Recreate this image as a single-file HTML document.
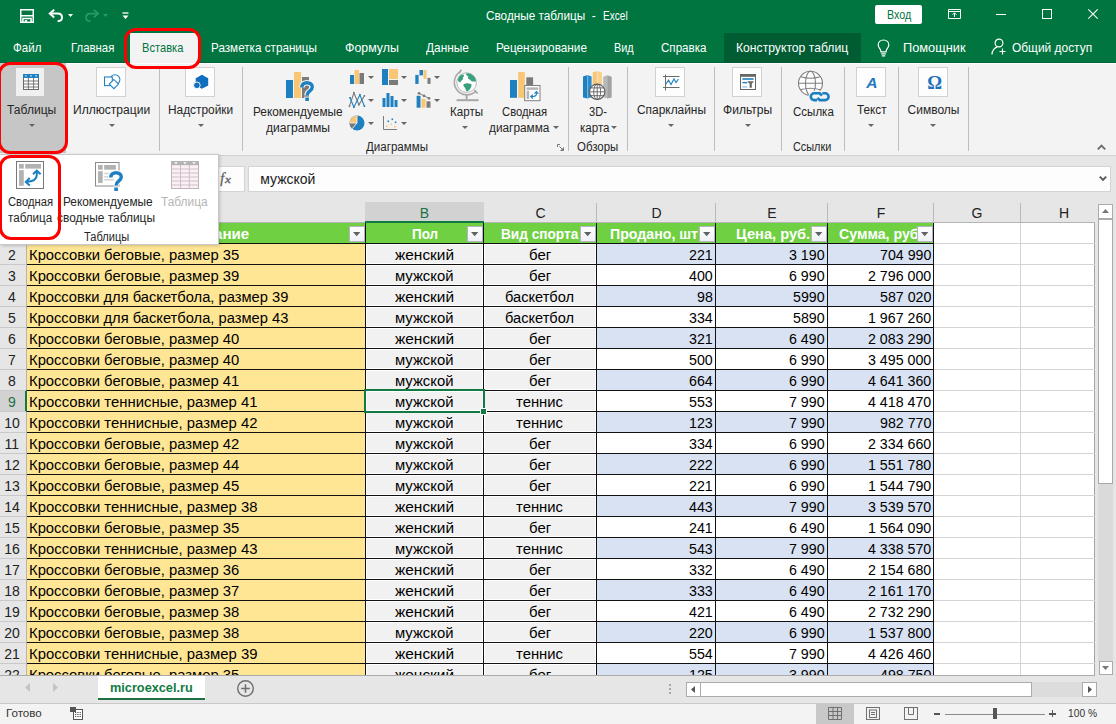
<!DOCTYPE html>
<html><head><meta charset="utf-8"><title>Excel</title>
<style>
html,body{margin:0;padding:0;}
body{width:1116px;height:724px;overflow:hidden;position:relative;background:#e6e6e6;font-family:"Liberation Sans",sans-serif;}
.r{position:absolute;box-sizing:border-box;}
.t{position:absolute;white-space:pre;line-height:1;transform-origin:0 0;font-family:"Liberation Sans",sans-serif;}
svg{overflow:visible}
</style></head><body>
<div class="r" style="left:0px;top:0px;width:1116px;height:63px;background:#007540;"></div>
<div class="r" style="left:0px;top:62px;width:1116px;height:1px;background:#00653a;"></div>
<svg class="r" style="left:20px;top:9px;" width="14" height="14" viewBox="0 0 14 14"><path d="M0.75 0.75H13.25V13.25H0.75Z M0.75 6.7H13.25 M2.9 13.25V9.5H11.1V13.25" fill="none" stroke="#fff" stroke-width="1.5"/><rect x="4.8" y="11.1" width="2.3" height="1.8" fill="#fff"/></svg>
<svg class="r" style="left:48px;top:9px;" width="16" height="13" viewBox="0 0 16 13"><path d="M6.2 0.8L1.8 4.6L6.2 8.4" fill="none" stroke="#fff" stroke-width="2" stroke-linejoin="miter"/><path d="M2.2 4.6H9.6C12.6 4.6 14 6.4 14 8.4C14 10.6 12.4 12 9.6 12.2" fill="none" stroke="#fff" stroke-width="2"/></svg>
<svg class="r" style="left:68px;top:14px;" width="6" height="3" viewBox="0 0 6 3"><path d="M0 0H5L2.5 3Z" fill="#fff"/></svg>
<svg class="r" style="left:84px;top:9px;" width="16" height="13" viewBox="0 0 16 13"><path d="M9.8 0.8L14.2 4.6L9.8 8.4" fill="none" stroke="#2a9a6c" stroke-width="1.7"/><path d="M13.8 4.6H6.4C3.4 4.6 2 6.4 2 8.4C2 10.6 3.6 12 6.4 12.2" fill="none" stroke="#2a9a6c" stroke-width="1.7"/></svg>
<svg class="r" style="left:103px;top:14px;" width="6" height="3" viewBox="0 0 6 3"><path d="M0 0H5L2.5 3Z" fill="#2a9a6c"/></svg>
<svg class="r" style="left:122px;top:12px;" width="7" height="8" viewBox="0 0 7 8"><path d="M0.5 1H6.5" stroke="#fff" stroke-width="1.3"/><path d="M0.5 3.6H6.5L3.5 7Z" fill="#fff"/></svg>
<span class="t" style="left:485.50px;top:10px;font-size:12.00px;color:#fff;transform:scaleX(0.9806);">Сводные таблицы</span>
<span class="t" style="left:591.80px;top:10px;font-size:12.00px;color:#fff;">-</span>
<span class="t" style="left:602.80px;top:10px;font-size:12.00px;color:#fff;transform:scaleX(0.8419);">Excel</span>
<div class="r" style="left:875px;top:5px;width:47px;height:19px;background:#fff;border-radius:2px;"></div>
<span class="t" style="left:886.80px;top:9px;font-size:12.00px;color:#007540;transform:scaleX(0.8923);">Вход</span>
<svg class="r" style="left:948px;top:9px;" width="13" height="10" viewBox="0 0 13 10"><path d="M0.5 0.5H12.5V9.5H0.5Z M0.5 2.5H12.5" fill="none" stroke="#fff" stroke-width="1"/><path d="M6.5 8V4 M4.5 5.8L6.5 3.8L8.5 5.8" fill="none" stroke="#fff" stroke-width="1"/></svg>
<div class="r" style="left:996px;top:14px;width:10px;height:1px;background:#fff;"></div>
<div class="r" style="left:1042px;top:9px;width:10px;height:10px;border:1px solid #fff;"></div>
<svg class="r" style="left:1088px;top:9px;" width="10" height="10" viewBox="0 0 10 10"><path d="M0.3 0.3L9.7 9.7M9.7 0.3L0.3 9.7" stroke="#fff" stroke-width="1.1"/></svg>
<div class="r" style="left:724px;top:33px;width:137px;height:30px;background:#005C32;"></div>
<span class="t" style="left:13.30px;top:42px;font-size:12.40px;color:#fff;transform:scaleX(0.9310);">Файл</span>
<span class="t" style="left:71.30px;top:42px;font-size:12.40px;color:#fff;transform:scaleX(0.9198);">Главная</span>
<span class="t" style="left:211.30px;top:42px;font-size:12.40px;color:#fff;transform:scaleX(0.9425);">Разметка страницы</span>
<span class="t" style="left:345.00px;top:42px;font-size:12.40px;color:#fff;">Формулы</span>
<span class="t" style="left:426.00px;top:42px;font-size:12.40px;color:#fff;transform:scaleX(0.9593);">Данные</span>
<span class="t" style="left:496.30px;top:42px;font-size:12.40px;color:#fff;transform:scaleX(0.9506);">Рецензирование</span>
<span class="t" style="left:614.30px;top:42px;font-size:12.40px;color:#fff;transform:scaleX(0.8777);">Вид</span>
<span class="t" style="left:661.30px;top:42px;font-size:12.40px;color:#fff;transform:scaleX(0.9349);">Справка</span>
<span class="t" style="left:736.00px;top:42px;font-size:12.40px;color:#fff;transform:scaleX(0.9817);">Конструктор таблиц</span>
<span class="t" style="left:903.40px;top:42px;font-size:12.40px;color:#fff;transform:scaleX(1.0313);">Помощник</span>
<span class="t" style="left:1011.60px;top:42px;font-size:12.40px;color:#fff;transform:scaleX(0.9625);">Общий доступ</span>
<div class="r" style="left:130px;top:33px;width:67.5px;height:32px;background:#f3f3f3;"></div>
<span class="t" style="left:142.30px;top:42px;font-size:12.40px;color:#007540;transform:scaleX(0.8975);">Вставка</span>
<svg class="r" style="left:877px;top:39px;" width="13" height="18" viewBox="0 0 13 18"><path d="M6.5 1C3.4 1 1.2 3.3 1.2 6.1C1.2 8.2 2.6 9.3 3.4 10.6C3.8 11.3 3.9 12 3.9 12.8H9.1C9.1 12 9.2 11.3 9.6 10.6C10.4 9.3 11.8 8.2 11.8 6.1C11.8 3.3 9.6 1 6.5 1Z" fill="none" stroke="#fff" stroke-width="1.2"/><path d="M4.2 14.8H8.8M4.8 16.8H8.2" stroke="#fff" stroke-width="1.2"/></svg>
<svg class="r" style="left:991px;top:38px;" width="16" height="18" viewBox="0 0 16 18"><circle cx="8" cy="5" r="3.9" fill="none" stroke="#fff" stroke-width="1.2"/><path d="M1 16.5C1 12 4 9.6 6.2 9.2" fill="none" stroke="#fff" stroke-width="1.2"/><path d="M11.5 10.5V16.5M8.5 13.5H14.5" stroke="#fff" stroke-width="1.2"/></svg>
<div class="r" style="left:0px;top:63px;width:1116px;height:92px;background:#f3f3f3;"></div>
<div class="r" style="left:0px;top:63px;width:1116px;height:1px;background:#fcfcfc;"></div>
<div class="r" style="left:0px;top:155px;width:1116px;height:1px;background:#d2d2d2;"></div>
<div class="r" style="left:0px;top:63px;width:66px;height:90px;background:#c6c6c6;"></div>
<div class="r" style="left:16px;top:68px;width:28px;height:28px;background:#f0f0f0;"></div>
<svg class="r" style="left:23px;top:74px;" width="16" height="16" viewBox="0 0 16 16"><rect x="0.5" y="0.5" width="15" height="15" fill="#fff" stroke="#6a6a6a" stroke-width="1"/><rect x="0" y="0" width="16" height="4" fill="#1e80c0"/><path d="M0.5 7H15.5M0.5 10H15.5M0.5 13H15.5M5.4 4V15.5M10.6 4V15.5" stroke="#6a6a6a" stroke-width="0.9"/><path d="M2 1.9H3.8M7.1 1.9H8.9M12.2 1.9H14" stroke="#fff" stroke-width="0.9"/></svg>
<span class="t" style="left:6.60px;top:104px;font-size:12.00px;color:#262626;transform:scaleX(1.0057);">Таблицы</span>
<svg class="r" style="left:28.5px;top:124px;" width="6" height="3" viewBox="0 0 6 3"><path d="M0 0H6L3 3Z" fill="#666"/></svg>
<div class="r" style="left:96px;top:67px;width:30px;height:30px;background:#fdfdfd;border:1px solid #d2d2d2;"></div>
<svg class="r" style="left:103px;top:73px;" width="18" height="17" viewBox="0 0 18 17"><circle cx="12" cy="6.6" r="4.9" fill="#fdfdfd" stroke="#1e80c0" stroke-width="1.05"/><rect x="1.5" y="4" width="7.8" height="8.6" fill="#fdfdfd" stroke="#1e80c0" stroke-width="1.05"/><path d="M10.9 6.5L15.5 11.1L10.9 15.7L6.3 11.1Z" fill="#fdfdfd" stroke="#1e80c0" stroke-width="1.05"/></svg>
<span class="t" style="left:73.40px;top:104px;font-size:12.00px;color:#262626;transform:scaleX(1.0047);">Иллюстрации</span>
<svg class="r" style="left:109.3px;top:124px;" width="6" height="3" viewBox="0 0 6 3"><path d="M0 0H6L3 3Z" fill="#666"/></svg>
<div class="r" style="left:159px;top:67px;width:1px;height:84px;background:#bebebe;"></div>
<div class="r" style="left:185px;top:67px;width:30px;height:30px;background:#fdfdfd;border:1px solid #d2d2d2;"></div>
<svg class="r" style="left:193px;top:74px;" width="16" height="16" viewBox="0 0 16 16"><path d="M8.9 0.8L15.2 4.2V11.4L8.9 14.8L2.7 11.4V4.2Z" fill="#106ebe"/><circle cx="3.9" cy="11.3" r="3.3" fill="#106ebe" stroke="#fdfdfd" stroke-width="0.9"/></svg>
<span class="t" style="left:168.40px;top:104px;font-size:12.00px;color:#262626;transform:scaleX(0.9891);">Надстройки</span>
<svg class="r" style="left:198px;top:124px;" width="6" height="3" viewBox="0 0 6 3"><path d="M0 0H6L3 3Z" fill="#666"/></svg>
<div class="r" style="left:242px;top:67px;width:1px;height:84px;background:#bebebe;"></div>
<svg class="r" style="left:286px;top:72px;" width="23" height="26" viewBox="0 0 23 26"><rect x="0" y="8" width="7" height="18" fill="#1e80c0"/><rect x="8" y="0" width="7" height="26" fill="#f9c676"/><rect x="16" y="5" width="7" height="21" fill="#7a7a7a"/></svg>
<svg class="r" style="left:299.8px;top:81px;" width="14" height="21" viewBox="0 0 14 21"><path d="M1.8 6.6C1.8 3.2 4 1.7 7 1.7C10.2 1.7 12.3 3.4 12.3 6C12.3 8.2 10.8 9.2 9.3 10.4C7.7 11.6 7.1 12.4 7.1 14.6" fill="none" stroke="#f3f3f3" stroke-width="5.6"/><rect x="4.2" y="15.6" width="5.8" height="5.4" fill="#f3f3f3"/><path d="M1.8 6.6C1.8 3.2 4 1.7 7 1.7C10.2 1.7 12.3 3.4 12.3 6C12.3 8.2 10.8 9.2 9.3 10.4C7.7 11.6 7.1 12.4 7.1 14.6" fill="none" stroke="#1e80c0" stroke-width="3.4"/><rect x="5.3" y="16.5" width="3.6" height="3.5" fill="#1e80c0"/></svg>
<span class="t" style="left:253.40px;top:106px;font-size:12.00px;color:#262626;transform:scaleX(0.9863);">Рекомендуемые</span>
<span class="t" style="left:265.60px;top:122px;font-size:12.00px;color:#262626;transform:scaleX(1.0120);">диаграммы</span>
<svg class="r" style="left:349px;top:69px;" width="16" height="15" viewBox="0 0 16 15"><rect x="1" y="6" width="4" height="9" fill="#1e80c0"/><rect x="5.5" y="1" width="4.5" height="14" fill="#f9c676"/><rect x="10.5" y="4" width="4.5" height="11" fill="#7a7a7a"/></svg>
<svg class="r" style="left:349px;top:92px;" width="16" height="16" viewBox="0 0 16 16"><path d="M0.5 14.2L4.9 0.8L9.9 12.8L15.4 3.8" fill="none" stroke="#7a7a7a" stroke-width="1.1"/><path d="M1 5.8L4.9 15.2L10.9 2.8L15.4 14.2" fill="none" stroke="#1e80c0" stroke-width="1.1"/><path d="M-0.3 13.4h1.6v1.6h-1.6zM4.1 0h1.6v1.6h-1.6zM9.1 12h1.6v1.6h-1.6zM14.6 3h1.6v1.6h-1.6z" fill="#7a7a7a"/><path d="M0.2 5h1.6v1.6h-1.6zM4.1 14.4h1.6v1.6h-1.6zM10.1 2h1.6v1.6h-1.6zM14.6 13.4h1.6v1.6h-1.6z" fill="#1e80c0"/></svg>
<svg class="r" style="left:349px;top:115px;" width="16" height="16" viewBox="0 0 16 16"><circle cx="8" cy="8" r="7.5" fill="#1e80c0"/><path d="M8 8V0.5A7.5 7.5 0 0 0 0.5 8Z" fill="#f9c676"/><path d="M8 8H0.5A7.5 7.5 0 0 0 3.2 13.8Z" fill="#7a7a7a"/><path d="M8 0.5V8H0.5M8 8L3.2 13.8" stroke="#f3f3f3" stroke-width="0.9" fill="none"/></svg>
<svg class="r" style="left:381.5px;top:69px;" width="17" height="16" viewBox="0 0 17 16"><rect x="0" y="0" width="6" height="16" fill="#1e80c0"/><rect x="7" y="0" width="9" height="10" fill="#f9c676"/><rect x="7" y="11" width="9" height="5" fill="#7a7a7a"/></svg>
<svg class="r" style="left:381.5px;top:91.6px;" width="16" height="15" viewBox="0 0 16 15"><rect x="0.5" y="6" width="3" height="9" fill="#1e80c0"/><rect x="4.5" y="1" width="3" height="14" fill="#1e80c0"/><rect x="8.5" y="4" width="3" height="11" fill="#1e80c0"/><rect x="12.5" y="8" width="3" height="7" fill="#1e80c0"/></svg>
<svg class="r" style="left:382px;top:116px;" width="15" height="15" viewBox="0 0 15 15"><path d="M1.5 0V13.5H15" fill="none" stroke="#7a7a7a" stroke-width="1"/><rect x="4" y="9.5" width="1.6" height="1.6" fill="#f9c676"/><rect x="5.5" y="4.5" width="1.6" height="1.6" fill="#1e80c0"/><rect x="8.5" y="7.5" width="1.6" height="1.6" fill="#f9c676"/><rect x="9.5" y="2.5" width="1.6" height="1.6" fill="#1e80c0"/><rect x="12" y="10" width="1.6" height="1.6" fill="#f9c676"/><rect x="12.8" y="5.5" width="1.6" height="1.6" fill="#1e80c0"/></svg>
<svg class="r" style="left:414.5px;top:69px;" width="16" height="15" viewBox="0 0 16 15"><rect x="0.3" y="5.9" width="3.3" height="9" fill="#1e80c0"/><rect x="4.5" y="1" width="3.5" height="5.4" fill="#1e80c0"/><rect x="8.5" y="1" width="3" height="8.9" fill="#f9c676"/><rect x="12.5" y="8.9" width="3" height="6" fill="#7a7a7a"/></svg>
<svg class="r" style="left:414.5px;top:92px;" width="16" height="16" viewBox="0 0 16 16"><rect x="1.6" y="3.8" width="3.9" height="11.9" fill="#1e80c0"/><rect x="6.5" y="6.8" width="4" height="8.9" fill="#f9c676"/><rect x="11.5" y="9.3" width="4" height="6.4" fill="#7a7a7a"/><path d="M4 1.3L14 6.3" stroke="#7a7a7a" stroke-width="0.9"/><circle cx="4" cy="1.3" r="1.35" fill="#7a7a7a"/><circle cx="9" cy="3.8" r="1.35" fill="#7a7a7a"/><circle cx="14" cy="6.3" r="1.35" fill="#7a7a7a"/></svg>
<svg class="r" style="left:368px;top:76px;" width="6" height="3" viewBox="0 0 6 3"><path d="M0 0H6L3 3Z" fill="#666"/></svg>
<svg class="r" style="left:368px;top:99px;" width="6" height="3" viewBox="0 0 6 3"><path d="M0 0H6L3 3Z" fill="#666"/></svg>
<svg class="r" style="left:368px;top:122px;" width="6" height="3" viewBox="0 0 6 3"><path d="M0 0H6L3 3Z" fill="#666"/></svg>
<svg class="r" style="left:401px;top:76px;" width="6" height="3" viewBox="0 0 6 3"><path d="M0 0H6L3 3Z" fill="#666"/></svg>
<svg class="r" style="left:401px;top:99px;" width="6" height="3" viewBox="0 0 6 3"><path d="M0 0H6L3 3Z" fill="#666"/></svg>
<svg class="r" style="left:401px;top:122px;" width="6" height="3" viewBox="0 0 6 3"><path d="M0 0H6L3 3Z" fill="#666"/></svg>
<svg class="r" style="left:434px;top:76px;" width="6" height="3" viewBox="0 0 6 3"><path d="M0 0H6L3 3Z" fill="#666"/></svg>
<svg class="r" style="left:434px;top:99px;" width="6" height="3" viewBox="0 0 6 3"><path d="M0 0H6L3 3Z" fill="#666"/></svg>
<span class="t" style="left:366.30px;top:141px;font-size:12.00px;color:#262626;transform:scaleX(0.9630);">Диаграммы</span>
<svg class="r" style="left:453px;top:69px;" width="27" height="33" viewBox="0 0 27 33"><path d="M7.2 2.6A12.6 12.6 0 1 0 22.6 22.4" fill="none" stroke="#a6a6a6" stroke-width="1.5"/><path d="M8.4 0.6L6 4.4M21.4 21L24.6 24.4" stroke="#a6a6a6" stroke-width="1.6"/><circle cx="13.6" cy="13.6" r="9.8" fill="#fff" stroke="#b0b0b0" stroke-width="0.9"/><path d="M5.2 9.5C6 7 8 5.6 10.2 5.6C11.6 6.4 11 7.6 9.8 8.4C10.6 9.6 9.6 10.8 8.4 11.4C7.8 13.2 6.6 13.6 5.6 12.6C4.8 11.6 4.8 10.4 5.2 9.5Z M12.8 4.4C15.6 3.8 19 4.8 21.2 7.6C22.8 9.6 23.2 11.6 22.8 12.6C21.6 13 20.6 12.2 19.4 12.6C18 12.2 17.6 10.6 16.4 10.4C14.8 10 14.4 8.6 15.4 7.6C14.2 6.8 13 5.8 12.8 4.4Z M10.6 15.2C12.4 14.2 15.4 14 17.8 15C19 15.6 18.6 17 18 18.2C17.2 20.4 15.6 22 13.6 22.6C12.6 21.2 12.8 19.6 11.8 18.4C10.8 17.6 10 16.2 10.6 15.2Z" fill="#3aa17e"/><path d="M13.6 26V30" stroke="#a6a6a6" stroke-width="2"/><path d="M3.6 31.2H25.6" stroke="#a6a6a6" stroke-width="2"/></svg>
<span class="t" style="left:449.60px;top:106px;font-size:12.00px;color:#262626;transform:scaleX(0.9678);">Карты</span>
<svg class="r" style="left:462.3px;top:126px;" width="6" height="3" viewBox="0 0 6 3"><path d="M0 0H6L3 3Z" fill="#666"/></svg>
<svg class="r" style="left:510px;top:72px;" width="31" height="29" viewBox="0 0 31 29"><rect x="0" y="8" width="7" height="17.8" fill="#1e80c0"/><rect x="8.2" y="0" width="6.6" height="25.8" fill="#f9c676"/><rect x="16.3" y="5.3" width="6.8" height="8" fill="#7a7a7a"/><rect x="14.7" y="13.5" width="15.3" height="15.2" fill="#fdfdfd" stroke="#808080" stroke-width="1"/><rect x="16.6" y="15.4" width="11.6" height="2.4" fill="#b5b5b5"/><rect x="16.6" y="18.8" width="2.5" height="8.2" fill="#b5b5b5"/><path d="M26.4 20.5V22C26.4 23.8 25.4 24.6 21.2 24.6" fill="none" stroke="#1a7fc1" stroke-width="1.2"/><path d="M24.5 21.6L26.4 19.6L28.3 21.6M22.8 22.8L20.8 24.6L22.8 26.5" fill="none" stroke="#1a7fc1" stroke-width="1.2"/></svg>
<span class="t" style="left:501.50px;top:106px;font-size:12.00px;color:#262626;transform:scaleX(0.9393);">Сводная</span>
<span class="t" style="left:489.00px;top:122px;font-size:12.00px;color:#262626;transform:scaleX(0.9850);">диаграмма</span>
<svg class="r" style="left:552.7px;top:126px;" width="6" height="3" viewBox="0 0 6 3"><path d="M0 0H6L3 3Z" fill="#666"/></svg>
<svg class="r" style="left:557px;top:144px;" width="7" height="7" viewBox="0 0 7 7"><path d="M0.5 3V0.5H3M6.5 3.5V6.5H3.5" fill="none" stroke="#777" stroke-width="1"/><path d="M2.5 2.5L6 6" stroke="#777" stroke-width="1"/><path d="M6.5 3.5V6.5H3.5Z" fill="#777"/></svg>
<div class="r" style="left:568px;top:67px;width:1px;height:84px;background:#bebebe;"></div>
<svg class="r" style="left:582px;top:70px;" width="31" height="31" viewBox="0 0 31 31"><path d="M1 6.5L5.5 5V28.5L1 27.5Z" fill="#1e80c0"/><path d="M5.5 5L9.6 6.5V27L5.5 28.5Z" fill="#2b8bc9"/><path d="M5.2 5.1H6.1V28.4H5.2Z" fill="#7fb8de"/><path d="M10.7 2.5L15.2 0.9V25H10.7Z" fill="#f9c676"/><path d="M15.2 0.9L20 2.5V25H15.2Z" fill="#fbd08c"/><path d="M14.9 1H15.7V25H14.9Z" fill="#fde6bd"/><path d="M21.2 6.8L25.2 5.2V28.5L21.2 27Z" fill="#b8b8b8"/><path d="M25.2 5.2L29.7 6.8V27.5L25.2 28.5Z" fill="#a2a2a2"/><circle cx="15.2" cy="21.8" r="7.7" fill="#fff" stroke="#5e5e5e" stroke-width="1.1"/><ellipse cx="15.2" cy="21.8" rx="3.5" ry="7.7" fill="none" stroke="#5e5e5e" stroke-width="0.9"/><path d="M7.5 21.8H22.9M15.2 14.1V29.5M8.7 17.9H21.7M8.7 25.7H21.7" stroke="#5e5e5e" stroke-width="0.9"/></svg>
<span class="t" style="left:589.40px;top:106px;font-size:12.00px;color:#262626;transform:scaleX(0.9265);">3D-</span>
<span class="t" style="left:579.50px;top:122px;font-size:12.00px;color:#262626;transform:scaleX(0.9622);">карта</span>
<svg class="r" style="left:611.4px;top:126px;" width="6" height="3" viewBox="0 0 6 3"><path d="M0 0H6L3 3Z" fill="#666"/></svg>
<span class="t" style="left:576.80px;top:141px;font-size:12.00px;color:#262626;transform:scaleX(0.9524);">Обзоры</span>
<div class="r" style="left:627px;top:67px;width:1px;height:84px;background:#bebebe;"></div>
<div class="r" style="left:655px;top:67px;width:30px;height:30px;background:#fdfdfd;border:1px solid #d2d2d2;"></div>
<svg class="r" style="left:663px;top:73.8px;" width="17" height="17" viewBox="0 0 17 17"><path d="M2.5 0.5V16.5M0 2.5H16.5M0 13.5H16.5" stroke="#6b6b6b" stroke-width="1" fill="none"/><path d="M3 10L5.5 6L8 10.5L11 5L13 8.5L15.5 5" fill="none" stroke="#1e80c0" stroke-width="1.1"/></svg>
<span class="t" style="left:636.70px;top:104px;font-size:12.00px;color:#262626;transform:scaleX(0.9922);">Спарклайны</span>
<svg class="r" style="left:668.3px;top:124px;" width="6" height="3" viewBox="0 0 6 3"><path d="M0 0H6L3 3Z" fill="#666"/></svg>
<div class="r" style="left:714px;top:67px;width:1px;height:84px;background:#bebebe;"></div>
<div class="r" style="left:732px;top:67px;width:30px;height:30px;background:#fdfdfd;border:1px solid #d2d2d2;"></div>
<svg class="r" style="left:740px;top:74px;" width="16" height="16" viewBox="0 0 16 16"><rect x="0.5" y="0.5" width="15" height="15" fill="#fff" stroke="#666" stroke-width="1"/><rect x="0" y="0" width="16" height="2.8" fill="#666"/><rect x="2.4" y="4.2" width="11.2" height="1.6" fill="#1e80c0"/><rect x="2.4" y="7.9" width="4.8" height="1.4" fill="#1e80c0"/><rect x="2.4" y="12.2" width="4.8" height="1.4" fill="#9cc3e4"/><path d="M7.2 7.2H14L11.8 9.8V13.8L9.6 13.8V9.8Z" fill="#666"/></svg>
<span class="t" style="left:723.30px;top:104px;font-size:12.00px;color:#262626;transform:scaleX(1.0069);">Фильтры</span>
<svg class="r" style="left:745.2px;top:124px;" width="6" height="3" viewBox="0 0 6 3"><path d="M0 0H6L3 3Z" fill="#666"/></svg>
<div class="r" style="left:781px;top:67px;width:1px;height:84px;background:#bebebe;"></div>
<svg class="r" style="left:798px;top:71px;" width="32" height="31" viewBox="0 0 32 31"><circle cx="12.5" cy="12.3" r="12" fill="#fdfdfd" stroke="#808080" stroke-width="1.1"/><ellipse cx="12.5" cy="12.3" rx="5" ry="12" fill="none" stroke="#808080" stroke-width="1.1"/><path d="M0.5 12.3H24.5M2.8 5.8Q12.5 8.8 22.2 5.8M2.8 18.8Q12.5 15.8 22.2 18.8" fill="none" stroke="#808080" stroke-width="1.1"/><g transform="translate(10.5,20.3)"><path d="M11.5 2H5.7A3.4 3.4 0 0 0 5.7 8.8H16.7A3.4 3.4 0 0 0 16.7 2Z" fill="#f3f3f3" stroke="#f3f3f3" stroke-width="5"/><path d="M8.6 8.8H5.7A3.4 3.4 0 0 1 5.7 2H11.2L13.4 4.3M13.8 2H16.7A3.4 3.4 0 0 1 16.7 8.8H11.2L9 6.5" fill="none" stroke="#1a7fc1" stroke-width="2.6"/></g></svg>
<span class="t" style="left:792.50px;top:106px;font-size:12.00px;color:#262626;transform:scaleX(0.9614);">Ссылка</span>
<span class="t" style="left:793.40px;top:141px;font-size:12.00px;color:#262626;transform:scaleX(0.9044);">Ссылки</span>
<div class="r" style="left:844px;top:67px;width:1px;height:84px;background:#bebebe;"></div>
<div class="r" style="left:856px;top:67px;width:30px;height:30px;background:#fdfdfd;border:1px solid #d2d2d2;"></div>
<span class="t" style="left:866.30px;top:75px;font-size:15.50px;color:#1e78c0;font-weight:bold;font-style:italic;">A</span>
<span class="t" style="left:857.40px;top:104px;font-size:12.00px;color:#262626;transform:scaleX(0.9788);">Текст</span>
<svg class="r" style="left:868.4px;top:124px;" width="6" height="3" viewBox="0 0 6 3"><path d="M0 0H6L3 3Z" fill="#666"/></svg>
<div class="r" style="left:898px;top:67px;width:1px;height:84px;background:#bebebe;"></div>
<div class="r" style="left:918px;top:67px;width:30px;height:30px;background:#fdfdfd;border:1px solid #d2d2d2;"></div>
<span class="t" style="left:927.20px;top:74px;font-size:18.50px;color:#1d72b8;font-weight:bold;font-family:'Liberation Serif',serif;">Ω</span>
<span class="t" style="left:907.60px;top:104px;font-size:12.00px;color:#262626;">Символы</span>
<svg class="r" style="left:930.2px;top:124px;" width="6" height="3" viewBox="0 0 6 3"><path d="M0 0H6L3 3Z" fill="#666"/></svg>
<div class="r" style="left:968px;top:67px;width:1px;height:84px;background:#bebebe;"></div>
<svg class="r" style="left:1097px;top:144px;" width="9" height="6" viewBox="0 0 9 6"><path d="M0.8 5.4L4.5 1.6L8.2 5.4" fill="none" stroke="#6e6e6e" stroke-width="2"/></svg>
<div class="r" style="left:-2px;top:62px;width:70px;height:92px;border:3.2px solid #f00;border-radius:12px;"></div>
<div class="r" style="left:124px;top:28px;width:77px;height:41px;border:3.2px solid #f00;border-radius:12px;"></div>
<div class="r" style="left:0px;top:156px;width:1116px;height:46px;background:#e6e6e6;"></div>
<div class="r" style="left:0px;top:166px;width:245px;height:26px;background:#fdfdfd;border:1px solid #d4d4d4;"></div>
<div class="r" style="left:248px;top:166px;width:863px;height:26px;background:#fdfdfd;border:1px solid #d4d4d4;"></div>
<span class="t" style="left:220.3px;top:172px;font-size:14px;color:#606060;font-family:'Liberation Serif',serif;font-style:italic;-webkit-text-stroke:0.3px #606060;">f</span>
<span class="t" style="left:225.4px;top:175px;font-size:10.5px;color:#606060;font-family:'Liberation Serif',serif;font-style:italic;-webkit-text-stroke:0.3px #606060;transform:scaleX(1.25);">x</span>
<span class="t" style="left:260.20px;top:172px;font-size:14.00px;color:#1a1a1a;">мужской</span>
<svg class="r" style="left:1098.5px;top:176px;" width="8" height="6" viewBox="0 0 8 6"><path d="M0.8 0.6L4 3.9L7.2 0.6" fill="none" stroke="#5a5a5a" stroke-width="2"/></svg>
<div class="r" style="left:27px;top:223px;width:1068px;height:452px;background:#fff;"></div>
<div class="r" style="left:0px;top:202px;width:1095px;height:21px;background:#e6e6e6;"></div>
<div class="r" style="left:365px;top:202px;width:119px;height:19px;background:#d2d2d2;"></div>
<div class="r" style="left:0px;top:223px;width:27px;height:452px;background:#e6e6e6;"></div>
<div class="r" style="left:27px;top:222px;width:1068px;height:1px;background:#b4b4b4;"></div>
<div class="r" style="left:26px;top:223px;width:1px;height:452px;background:#b4b4b4;"></div>
<div class="r" style="left:1094px;top:223px;width:1px;height:452px;background:#a6a6a6;"></div>
<div class="r" style="left:365px;top:221px;width:119px;height:2px;background:#107a40;"></div>
<span class="t" style="left:419.85px;top:206px;font-size:14.00px;color:#1e7145;">B</span>
<span class="t" style="left:535.46px;top:206px;font-size:14.00px;color:#222;">C</span>
<span class="t" style="left:651.46px;top:206px;font-size:14.00px;color:#222;">D</span>
<span class="t" style="left:767.35px;top:206px;font-size:14.00px;color:#222;">E</span>
<span class="t" style="left:876.73px;top:206px;font-size:14.00px;color:#222;">F</span>
<span class="t" style="left:971.54px;top:206px;font-size:14.00px;color:#222;">G</span>
<span class="t" style="left:1058.96px;top:206px;font-size:14.00px;color:#222;">H</span>
<div class="r" style="left:596px;top:203px;width:1px;height:19px;background:#b9b9b9;"></div>
<div class="r" style="left:715px;top:203px;width:1px;height:19px;background:#b9b9b9;"></div>
<div class="r" style="left:827px;top:203px;width:1px;height:19px;background:#b9b9b9;"></div>
<div class="r" style="left:933px;top:203px;width:1px;height:19px;background:#b9b9b9;"></div>
<div class="r" style="left:1020px;top:203px;width:1px;height:19px;background:#b9b9b9;"></div>
<div class="r" style="left:934px;top:243px;width:161px;height:1px;background:#d4d4d4;"></div>
<div class="r" style="left:934px;top:264px;width:161px;height:1px;background:#d4d4d4;"></div>
<div class="r" style="left:934px;top:285px;width:161px;height:1px;background:#d4d4d4;"></div>
<div class="r" style="left:934px;top:306px;width:161px;height:1px;background:#d4d4d4;"></div>
<div class="r" style="left:934px;top:327px;width:161px;height:1px;background:#d4d4d4;"></div>
<div class="r" style="left:934px;top:348px;width:161px;height:1px;background:#d4d4d4;"></div>
<div class="r" style="left:934px;top:369px;width:161px;height:1px;background:#d4d4d4;"></div>
<div class="r" style="left:934px;top:390px;width:161px;height:1px;background:#d4d4d4;"></div>
<div class="r" style="left:934px;top:411px;width:161px;height:1px;background:#d4d4d4;"></div>
<div class="r" style="left:934px;top:432px;width:161px;height:1px;background:#d4d4d4;"></div>
<div class="r" style="left:934px;top:453px;width:161px;height:1px;background:#d4d4d4;"></div>
<div class="r" style="left:934px;top:474px;width:161px;height:1px;background:#d4d4d4;"></div>
<div class="r" style="left:934px;top:495px;width:161px;height:1px;background:#d4d4d4;"></div>
<div class="r" style="left:934px;top:516px;width:161px;height:1px;background:#d4d4d4;"></div>
<div class="r" style="left:934px;top:537px;width:161px;height:1px;background:#d4d4d4;"></div>
<div class="r" style="left:934px;top:558px;width:161px;height:1px;background:#d4d4d4;"></div>
<div class="r" style="left:934px;top:579px;width:161px;height:1px;background:#d4d4d4;"></div>
<div class="r" style="left:934px;top:600px;width:161px;height:1px;background:#d4d4d4;"></div>
<div class="r" style="left:934px;top:621px;width:161px;height:1px;background:#d4d4d4;"></div>
<div class="r" style="left:934px;top:642px;width:161px;height:1px;background:#d4d4d4;"></div>
<div class="r" style="left:934px;top:663px;width:161px;height:1px;background:#d4d4d4;"></div>
<div class="r" style="left:934px;top:684px;width:161px;height:1px;background:#d4d4d4;"></div>
<div class="r" style="left:1020px;top:223px;width:1px;height:452px;background:#d4d4d4;"></div>
<div class="r" style="left:27px;top:223px;width:907px;height:20px;background:#6FD041;"></div>
<div class="r" style="left:27px;top:244px;width:338px;height:431px;background:#FFE695;"></div>
<div class="r" style="left:365px;top:244px;width:232px;height:431px;background:#f1f1f1;"></div>
<div class="r" style="left:597px;top:244px;width:337px;height:21px;background:#D8E2F2;"></div>
<div class="r" style="left:597px;top:286px;width:337px;height:21px;background:#D8E2F2;"></div>
<div class="r" style="left:597px;top:328px;width:337px;height:21px;background:#D8E2F2;"></div>
<div class="r" style="left:597px;top:370px;width:337px;height:21px;background:#D8E2F2;"></div>
<div class="r" style="left:597px;top:412px;width:337px;height:21px;background:#D8E2F2;"></div>
<div class="r" style="left:597px;top:454px;width:337px;height:21px;background:#D8E2F2;"></div>
<div class="r" style="left:597px;top:496px;width:337px;height:21px;background:#D8E2F2;"></div>
<div class="r" style="left:597px;top:538px;width:337px;height:21px;background:#D8E2F2;"></div>
<div class="r" style="left:597px;top:580px;width:337px;height:21px;background:#D8E2F2;"></div>
<div class="r" style="left:597px;top:622px;width:337px;height:21px;background:#D8E2F2;"></div>
<div class="r" style="left:597px;top:664px;width:337px;height:21px;background:#D8E2F2;"></div>
<div class="r" style="left:366px;top:244px;width:230px;height:1px;background:#fff;"></div>
<div class="r" style="left:366px;top:263px;width:230px;height:1px;background:#fff;"></div>
<div class="r" style="left:366px;top:265px;width:230px;height:1px;background:#fff;"></div>
<div class="r" style="left:366px;top:284px;width:230px;height:1px;background:#fff;"></div>
<div class="r" style="left:366px;top:286px;width:230px;height:1px;background:#fff;"></div>
<div class="r" style="left:366px;top:305px;width:230px;height:1px;background:#fff;"></div>
<div class="r" style="left:366px;top:307px;width:230px;height:1px;background:#fff;"></div>
<div class="r" style="left:366px;top:326px;width:230px;height:1px;background:#fff;"></div>
<div class="r" style="left:366px;top:328px;width:230px;height:1px;background:#fff;"></div>
<div class="r" style="left:366px;top:347px;width:230px;height:1px;background:#fff;"></div>
<div class="r" style="left:366px;top:349px;width:230px;height:1px;background:#fff;"></div>
<div class="r" style="left:366px;top:368px;width:230px;height:1px;background:#fff;"></div>
<div class="r" style="left:366px;top:370px;width:230px;height:1px;background:#fff;"></div>
<div class="r" style="left:366px;top:389px;width:230px;height:1px;background:#fff;"></div>
<div class="r" style="left:366px;top:391px;width:230px;height:1px;background:#fff;"></div>
<div class="r" style="left:366px;top:410px;width:230px;height:1px;background:#fff;"></div>
<div class="r" style="left:366px;top:412px;width:230px;height:1px;background:#fff;"></div>
<div class="r" style="left:366px;top:431px;width:230px;height:1px;background:#fff;"></div>
<div class="r" style="left:366px;top:433px;width:230px;height:1px;background:#fff;"></div>
<div class="r" style="left:366px;top:452px;width:230px;height:1px;background:#fff;"></div>
<div class="r" style="left:366px;top:454px;width:230px;height:1px;background:#fff;"></div>
<div class="r" style="left:366px;top:473px;width:230px;height:1px;background:#fff;"></div>
<div class="r" style="left:366px;top:475px;width:230px;height:1px;background:#fff;"></div>
<div class="r" style="left:366px;top:494px;width:230px;height:1px;background:#fff;"></div>
<div class="r" style="left:366px;top:496px;width:230px;height:1px;background:#fff;"></div>
<div class="r" style="left:366px;top:515px;width:230px;height:1px;background:#fff;"></div>
<div class="r" style="left:366px;top:517px;width:230px;height:1px;background:#fff;"></div>
<div class="r" style="left:366px;top:536px;width:230px;height:1px;background:#fff;"></div>
<div class="r" style="left:366px;top:538px;width:230px;height:1px;background:#fff;"></div>
<div class="r" style="left:366px;top:557px;width:230px;height:1px;background:#fff;"></div>
<div class="r" style="left:366px;top:559px;width:230px;height:1px;background:#fff;"></div>
<div class="r" style="left:366px;top:578px;width:230px;height:1px;background:#fff;"></div>
<div class="r" style="left:366px;top:580px;width:230px;height:1px;background:#fff;"></div>
<div class="r" style="left:366px;top:599px;width:230px;height:1px;background:#fff;"></div>
<div class="r" style="left:366px;top:601px;width:230px;height:1px;background:#fff;"></div>
<div class="r" style="left:366px;top:620px;width:230px;height:1px;background:#fff;"></div>
<div class="r" style="left:366px;top:622px;width:230px;height:1px;background:#fff;"></div>
<div class="r" style="left:366px;top:641px;width:230px;height:1px;background:#fff;"></div>
<div class="r" style="left:366px;top:643px;width:230px;height:1px;background:#fff;"></div>
<div class="r" style="left:366px;top:662px;width:230px;height:1px;background:#fff;"></div>
<div class="r" style="left:366px;top:664px;width:230px;height:1px;background:#fff;"></div>
<div class="r" style="left:366px;top:244px;width:1px;height:431px;background:#fff;"></div>
<div class="r" style="left:482px;top:244px;width:1px;height:431px;background:#fff;"></div>
<div class="r" style="left:484px;top:244px;width:1px;height:431px;background:#fff;"></div>
<div class="r" style="left:595px;top:244px;width:1px;height:431px;background:#fff;"></div>
<div class="r" style="left:27px;top:243px;width:907px;height:1px;background:#111;"></div>
<div class="r" style="left:27px;top:264px;width:907px;height:1px;background:#111;"></div>
<div class="r" style="left:27px;top:285px;width:907px;height:1px;background:#111;"></div>
<div class="r" style="left:27px;top:306px;width:907px;height:1px;background:#111;"></div>
<div class="r" style="left:27px;top:327px;width:907px;height:1px;background:#111;"></div>
<div class="r" style="left:27px;top:348px;width:907px;height:1px;background:#111;"></div>
<div class="r" style="left:27px;top:369px;width:907px;height:1px;background:#111;"></div>
<div class="r" style="left:27px;top:390px;width:907px;height:1px;background:#111;"></div>
<div class="r" style="left:27px;top:411px;width:907px;height:1px;background:#111;"></div>
<div class="r" style="left:27px;top:432px;width:907px;height:1px;background:#111;"></div>
<div class="r" style="left:27px;top:453px;width:907px;height:1px;background:#111;"></div>
<div class="r" style="left:27px;top:474px;width:907px;height:1px;background:#111;"></div>
<div class="r" style="left:27px;top:495px;width:907px;height:1px;background:#111;"></div>
<div class="r" style="left:27px;top:516px;width:907px;height:1px;background:#111;"></div>
<div class="r" style="left:27px;top:537px;width:907px;height:1px;background:#111;"></div>
<div class="r" style="left:27px;top:558px;width:907px;height:1px;background:#111;"></div>
<div class="r" style="left:27px;top:579px;width:907px;height:1px;background:#111;"></div>
<div class="r" style="left:27px;top:600px;width:907px;height:1px;background:#111;"></div>
<div class="r" style="left:27px;top:621px;width:907px;height:1px;background:#111;"></div>
<div class="r" style="left:27px;top:642px;width:907px;height:1px;background:#111;"></div>
<div class="r" style="left:27px;top:663px;width:907px;height:1px;background:#111;"></div>
<div class="r" style="left:365px;top:223px;width:1px;height:452px;background:#111;"></div>
<div class="r" style="left:483px;top:223px;width:1px;height:452px;background:#111;"></div>
<div class="r" style="left:596px;top:223px;width:1px;height:452px;background:#111;"></div>
<div class="r" style="left:715px;top:223px;width:1px;height:452px;background:#111;"></div>
<div class="r" style="left:827px;top:223px;width:1px;height:452px;background:#111;"></div>
<div class="r" style="left:933px;top:223px;width:1px;height:452px;background:#111;"></div>
<span class="t" style="left:8.02px;top:248px;font-size:14.00px;color:#222;">2</span>
<span class="t" style="left:8.02px;top:269px;font-size:14.00px;color:#222;">3</span>
<span class="t" style="left:8.02px;top:290px;font-size:14.00px;color:#222;">4</span>
<span class="t" style="left:8.02px;top:311px;font-size:14.00px;color:#222;">5</span>
<span class="t" style="left:8.02px;top:332px;font-size:14.00px;color:#222;">6</span>
<span class="t" style="left:8.02px;top:353px;font-size:14.00px;color:#222;">7</span>
<span class="t" style="left:8.02px;top:374px;font-size:14.00px;color:#222;">8</span>
<span class="t" style="left:8.02px;top:395px;font-size:14.00px;color:#1e7145;">9</span>
<span class="t" style="left:4.13px;top:416px;font-size:14.00px;color:#222;">10</span>
<span class="t" style="left:4.62px;top:437px;font-size:14.00px;color:#222;">11</span>
<span class="t" style="left:4.13px;top:458px;font-size:14.00px;color:#222;">12</span>
<span class="t" style="left:4.13px;top:479px;font-size:14.00px;color:#222;">13</span>
<span class="t" style="left:4.13px;top:500px;font-size:14.00px;color:#222;">14</span>
<span class="t" style="left:4.13px;top:521px;font-size:14.00px;color:#222;">15</span>
<span class="t" style="left:4.13px;top:542px;font-size:14.00px;color:#222;">16</span>
<span class="t" style="left:4.13px;top:563px;font-size:14.00px;color:#222;">17</span>
<span class="t" style="left:4.13px;top:584px;font-size:14.00px;color:#222;">18</span>
<span class="t" style="left:4.13px;top:605px;font-size:14.00px;color:#222;">19</span>
<span class="t" style="left:4.13px;top:626px;font-size:14.00px;color:#222;">20</span>
<span class="t" style="left:4.13px;top:647px;font-size:14.00px;color:#222;">21</span>
<span class="t" style="left:4.13px;top:668px;font-size:14.00px;color:#222;">22</span>
<div class="r" style="left:0px;top:391px;width:26px;height:21px;background:#d2d2d2;"></div>
<span class="t" style="left:8.02px;top:395px;font-size:14.00px;color:#1e7145;">9</span>
<div class="r" style="left:25px;top:390px;width:2px;height:22px;background:#107a40;"></div>
<div class="r" style="left:0px;top:243px;width:26px;height:1px;background:#c9c9c9;"></div>
<div class="r" style="left:0px;top:264px;width:26px;height:1px;background:#c9c9c9;"></div>
<div class="r" style="left:0px;top:285px;width:26px;height:1px;background:#c9c9c9;"></div>
<div class="r" style="left:0px;top:306px;width:26px;height:1px;background:#c9c9c9;"></div>
<div class="r" style="left:0px;top:327px;width:26px;height:1px;background:#c9c9c9;"></div>
<div class="r" style="left:0px;top:348px;width:26px;height:1px;background:#c9c9c9;"></div>
<div class="r" style="left:0px;top:369px;width:26px;height:1px;background:#c9c9c9;"></div>
<div class="r" style="left:0px;top:390px;width:26px;height:1px;background:#c9c9c9;"></div>
<div class="r" style="left:0px;top:411px;width:26px;height:1px;background:#c9c9c9;"></div>
<div class="r" style="left:0px;top:432px;width:26px;height:1px;background:#c9c9c9;"></div>
<div class="r" style="left:0px;top:453px;width:26px;height:1px;background:#c9c9c9;"></div>
<div class="r" style="left:0px;top:474px;width:26px;height:1px;background:#c9c9c9;"></div>
<div class="r" style="left:0px;top:495px;width:26px;height:1px;background:#c9c9c9;"></div>
<div class="r" style="left:0px;top:516px;width:26px;height:1px;background:#c9c9c9;"></div>
<div class="r" style="left:0px;top:537px;width:26px;height:1px;background:#c9c9c9;"></div>
<div class="r" style="left:0px;top:558px;width:26px;height:1px;background:#c9c9c9;"></div>
<div class="r" style="left:0px;top:579px;width:26px;height:1px;background:#c9c9c9;"></div>
<div class="r" style="left:0px;top:600px;width:26px;height:1px;background:#c9c9c9;"></div>
<div class="r" style="left:0px;top:621px;width:26px;height:1px;background:#c9c9c9;"></div>
<div class="r" style="left:0px;top:642px;width:26px;height:1px;background:#c9c9c9;"></div>
<div class="r" style="left:0px;top:663px;width:26px;height:1px;background:#c9c9c9;"></div>
<div class="r" style="left:0px;top:684px;width:26px;height:1px;background:#c9c9c9;"></div>
<span class="t" style="left:29.30px;top:248px;font-size:14.00px;color:#000;transform:scaleX(1.0580);">Кроссовки беговые, размер 35</span>
<span class="t" style="left:395.10px;top:248px;font-size:14.00px;color:#000;transform:scaleX(1.1003);">женский</span>
<span class="t" style="left:528.75px;top:248px;font-size:14.00px;color:#000;transform:scaleX(1.0666);">бег</span>
<span class="t" style="left:689.29px;top:248px;font-size:14.00px;color:#000;transform:scaleX(1.0150);">221</span>
<span class="t" style="left:789.44px;top:248px;font-size:14.00px;color:#000;transform:scaleX(1.0150);">3 190</span>
<span class="t" style="left:879.83px;top:248px;font-size:14.00px;color:#000;transform:scaleX(1.0150);">704 990</span>
<span class="t" style="left:29.30px;top:269px;font-size:14.00px;color:#000;transform:scaleX(1.0580);">Кроссовки беговые, размер 39</span>
<span class="t" style="left:395.35px;top:269px;font-size:14.00px;color:#000;transform:scaleX(1.0592);">мужской</span>
<span class="t" style="left:528.75px;top:269px;font-size:14.00px;color:#000;transform:scaleX(1.0666);">бег</span>
<span class="t" style="left:689.29px;top:269px;font-size:14.00px;color:#000;transform:scaleX(1.0150);">400</span>
<span class="t" style="left:789.44px;top:269px;font-size:14.00px;color:#000;transform:scaleX(1.0150);">6 990</span>
<span class="t" style="left:867.98px;top:269px;font-size:14.00px;color:#000;transform:scaleX(1.0150);">2 796 000</span>
<span class="t" style="left:29.30px;top:290px;font-size:14.00px;color:#000;transform:scaleX(1.0500);">Кроссовки для баскетбола, размер 39</span>
<span class="t" style="left:395.10px;top:290px;font-size:14.00px;color:#000;transform:scaleX(1.1003);">женский</span>
<span class="t" style="left:505.30px;top:290px;font-size:14.00px;color:#000;transform:scaleX(1.0431);">баскетбол</span>
<span class="t" style="left:697.19px;top:290px;font-size:14.00px;color:#000;transform:scaleX(1.0150);">98</span>
<span class="t" style="left:793.39px;top:290px;font-size:14.00px;color:#000;transform:scaleX(1.0150);">5990</span>
<span class="t" style="left:879.83px;top:290px;font-size:14.00px;color:#000;transform:scaleX(1.0150);">587 020</span>
<span class="t" style="left:29.30px;top:311px;font-size:14.00px;color:#000;transform:scaleX(1.0500);">Кроссовки для баскетбола, размер 43</span>
<span class="t" style="left:395.35px;top:311px;font-size:14.00px;color:#000;transform:scaleX(1.0592);">мужской</span>
<span class="t" style="left:505.30px;top:311px;font-size:14.00px;color:#000;transform:scaleX(1.0431);">баскетбол</span>
<span class="t" style="left:689.29px;top:311px;font-size:14.00px;color:#000;transform:scaleX(1.0150);">334</span>
<span class="t" style="left:793.39px;top:311px;font-size:14.00px;color:#000;transform:scaleX(1.0150);">5890</span>
<span class="t" style="left:867.98px;top:311px;font-size:14.00px;color:#000;transform:scaleX(1.0150);">1 967 260</span>
<span class="t" style="left:29.30px;top:332px;font-size:14.00px;color:#000;transform:scaleX(1.0580);">Кроссовки беговые, размер 40</span>
<span class="t" style="left:395.10px;top:332px;font-size:14.00px;color:#000;transform:scaleX(1.1003);">женский</span>
<span class="t" style="left:528.75px;top:332px;font-size:14.00px;color:#000;transform:scaleX(1.0666);">бег</span>
<span class="t" style="left:689.29px;top:332px;font-size:14.00px;color:#000;transform:scaleX(1.0150);">321</span>
<span class="t" style="left:789.44px;top:332px;font-size:14.00px;color:#000;transform:scaleX(1.0150);">6 490</span>
<span class="t" style="left:867.98px;top:332px;font-size:14.00px;color:#000;transform:scaleX(1.0150);">2 083 290</span>
<span class="t" style="left:29.30px;top:353px;font-size:14.00px;color:#000;transform:scaleX(1.0580);">Кроссовки беговые, размер 40</span>
<span class="t" style="left:395.35px;top:353px;font-size:14.00px;color:#000;transform:scaleX(1.0592);">мужской</span>
<span class="t" style="left:528.75px;top:353px;font-size:14.00px;color:#000;transform:scaleX(1.0666);">бег</span>
<span class="t" style="left:689.29px;top:353px;font-size:14.00px;color:#000;transform:scaleX(1.0150);">500</span>
<span class="t" style="left:789.44px;top:353px;font-size:14.00px;color:#000;transform:scaleX(1.0150);">6 990</span>
<span class="t" style="left:867.98px;top:353px;font-size:14.00px;color:#000;transform:scaleX(1.0150);">3 495 000</span>
<span class="t" style="left:29.30px;top:374px;font-size:14.00px;color:#000;transform:scaleX(1.0580);">Кроссовки беговые, размер 41</span>
<span class="t" style="left:395.35px;top:374px;font-size:14.00px;color:#000;transform:scaleX(1.0592);">мужской</span>
<span class="t" style="left:528.75px;top:374px;font-size:14.00px;color:#000;transform:scaleX(1.0666);">бег</span>
<span class="t" style="left:689.29px;top:374px;font-size:14.00px;color:#000;transform:scaleX(1.0150);">664</span>
<span class="t" style="left:789.44px;top:374px;font-size:14.00px;color:#000;transform:scaleX(1.0150);">6 990</span>
<span class="t" style="left:867.98px;top:374px;font-size:14.00px;color:#000;transform:scaleX(1.0150);">4 641 360</span>
<span class="t" style="left:29.30px;top:395px;font-size:14.00px;color:#000;transform:scaleX(1.0620);">Кроссовки теннисные, размер 41</span>
<span class="t" style="left:395.35px;top:395px;font-size:14.00px;color:#000;transform:scaleX(1.0592);">мужской</span>
<span class="t" style="left:516.30px;top:395px;font-size:14.00px;color:#000;transform:scaleX(1.0607);">теннис</span>
<span class="t" style="left:689.29px;top:395px;font-size:14.00px;color:#000;transform:scaleX(1.0150);">553</span>
<span class="t" style="left:789.44px;top:395px;font-size:14.00px;color:#000;transform:scaleX(1.0150);">7 990</span>
<span class="t" style="left:867.98px;top:395px;font-size:14.00px;color:#000;transform:scaleX(1.0150);">4 418 470</span>
<span class="t" style="left:29.30px;top:416px;font-size:14.00px;color:#000;transform:scaleX(1.0620);">Кроссовки теннисные, размер 42</span>
<span class="t" style="left:395.35px;top:416px;font-size:14.00px;color:#000;transform:scaleX(1.0592);">мужской</span>
<span class="t" style="left:516.30px;top:416px;font-size:14.00px;color:#000;transform:scaleX(1.0607);">теннис</span>
<span class="t" style="left:689.29px;top:416px;font-size:14.00px;color:#000;transform:scaleX(1.0150);">123</span>
<span class="t" style="left:789.44px;top:416px;font-size:14.00px;color:#000;transform:scaleX(1.0150);">7 990</span>
<span class="t" style="left:879.83px;top:416px;font-size:14.00px;color:#000;transform:scaleX(1.0150);">982 770</span>
<span class="t" style="left:29.30px;top:437px;font-size:14.00px;color:#000;transform:scaleX(1.0580);">Кроссовки беговые, размер 42</span>
<span class="t" style="left:395.35px;top:437px;font-size:14.00px;color:#000;transform:scaleX(1.0592);">мужской</span>
<span class="t" style="left:528.75px;top:437px;font-size:14.00px;color:#000;transform:scaleX(1.0666);">бег</span>
<span class="t" style="left:689.29px;top:437px;font-size:14.00px;color:#000;transform:scaleX(1.0150);">334</span>
<span class="t" style="left:789.44px;top:437px;font-size:14.00px;color:#000;transform:scaleX(1.0150);">6 990</span>
<span class="t" style="left:867.98px;top:437px;font-size:14.00px;color:#000;transform:scaleX(1.0150);">2 334 660</span>
<span class="t" style="left:29.30px;top:458px;font-size:14.00px;color:#000;transform:scaleX(1.0580);">Кроссовки беговые, размер 44</span>
<span class="t" style="left:395.35px;top:458px;font-size:14.00px;color:#000;transform:scaleX(1.0592);">мужской</span>
<span class="t" style="left:528.75px;top:458px;font-size:14.00px;color:#000;transform:scaleX(1.0666);">бег</span>
<span class="t" style="left:689.29px;top:458px;font-size:14.00px;color:#000;transform:scaleX(1.0150);">222</span>
<span class="t" style="left:789.44px;top:458px;font-size:14.00px;color:#000;transform:scaleX(1.0150);">6 990</span>
<span class="t" style="left:867.98px;top:458px;font-size:14.00px;color:#000;transform:scaleX(1.0150);">1 551 780</span>
<span class="t" style="left:29.30px;top:479px;font-size:14.00px;color:#000;transform:scaleX(1.0580);">Кроссовки беговые, размер 45</span>
<span class="t" style="left:395.35px;top:479px;font-size:14.00px;color:#000;transform:scaleX(1.0592);">мужской</span>
<span class="t" style="left:528.75px;top:479px;font-size:14.00px;color:#000;transform:scaleX(1.0666);">бег</span>
<span class="t" style="left:689.29px;top:479px;font-size:14.00px;color:#000;transform:scaleX(1.0150);">221</span>
<span class="t" style="left:789.44px;top:479px;font-size:14.00px;color:#000;transform:scaleX(1.0150);">6 990</span>
<span class="t" style="left:867.98px;top:479px;font-size:14.00px;color:#000;transform:scaleX(1.0150);">1 544 790</span>
<span class="t" style="left:29.30px;top:500px;font-size:14.00px;color:#000;transform:scaleX(1.0620);">Кроссовки теннисные, размер 38</span>
<span class="t" style="left:395.10px;top:500px;font-size:14.00px;color:#000;transform:scaleX(1.1003);">женский</span>
<span class="t" style="left:516.30px;top:500px;font-size:14.00px;color:#000;transform:scaleX(1.0607);">теннис</span>
<span class="t" style="left:689.29px;top:500px;font-size:14.00px;color:#000;transform:scaleX(1.0150);">443</span>
<span class="t" style="left:789.44px;top:500px;font-size:14.00px;color:#000;transform:scaleX(1.0150);">7 990</span>
<span class="t" style="left:867.98px;top:500px;font-size:14.00px;color:#000;transform:scaleX(1.0150);">3 539 570</span>
<span class="t" style="left:29.30px;top:521px;font-size:14.00px;color:#000;transform:scaleX(1.0580);">Кроссовки беговые, размер 35</span>
<span class="t" style="left:395.10px;top:521px;font-size:14.00px;color:#000;transform:scaleX(1.1003);">женский</span>
<span class="t" style="left:528.75px;top:521px;font-size:14.00px;color:#000;transform:scaleX(1.0666);">бег</span>
<span class="t" style="left:689.29px;top:521px;font-size:14.00px;color:#000;transform:scaleX(1.0150);">241</span>
<span class="t" style="left:789.44px;top:521px;font-size:14.00px;color:#000;transform:scaleX(1.0150);">6 490</span>
<span class="t" style="left:867.98px;top:521px;font-size:14.00px;color:#000;transform:scaleX(1.0150);">1 564 090</span>
<span class="t" style="left:29.30px;top:542px;font-size:14.00px;color:#000;transform:scaleX(1.0620);">Кроссовки теннисные, размер 43</span>
<span class="t" style="left:395.35px;top:542px;font-size:14.00px;color:#000;transform:scaleX(1.0592);">мужской</span>
<span class="t" style="left:516.30px;top:542px;font-size:14.00px;color:#000;transform:scaleX(1.0607);">теннис</span>
<span class="t" style="left:689.29px;top:542px;font-size:14.00px;color:#000;transform:scaleX(1.0150);">543</span>
<span class="t" style="left:789.44px;top:542px;font-size:14.00px;color:#000;transform:scaleX(1.0150);">7 990</span>
<span class="t" style="left:867.98px;top:542px;font-size:14.00px;color:#000;transform:scaleX(1.0150);">4 338 570</span>
<span class="t" style="left:29.30px;top:563px;font-size:14.00px;color:#000;transform:scaleX(1.0580);">Кроссовки беговые, размер 36</span>
<span class="t" style="left:395.10px;top:563px;font-size:14.00px;color:#000;transform:scaleX(1.1003);">женский</span>
<span class="t" style="left:528.75px;top:563px;font-size:14.00px;color:#000;transform:scaleX(1.0666);">бег</span>
<span class="t" style="left:689.29px;top:563px;font-size:14.00px;color:#000;transform:scaleX(1.0150);">332</span>
<span class="t" style="left:789.44px;top:563px;font-size:14.00px;color:#000;transform:scaleX(1.0150);">6 490</span>
<span class="t" style="left:867.98px;top:563px;font-size:14.00px;color:#000;transform:scaleX(1.0150);">2 154 680</span>
<span class="t" style="left:29.30px;top:584px;font-size:14.00px;color:#000;transform:scaleX(1.0580);">Кроссовки беговые, размер 37</span>
<span class="t" style="left:395.10px;top:584px;font-size:14.00px;color:#000;transform:scaleX(1.1003);">женский</span>
<span class="t" style="left:528.75px;top:584px;font-size:14.00px;color:#000;transform:scaleX(1.0666);">бег</span>
<span class="t" style="left:689.29px;top:584px;font-size:14.00px;color:#000;transform:scaleX(1.0150);">333</span>
<span class="t" style="left:789.44px;top:584px;font-size:14.00px;color:#000;transform:scaleX(1.0150);">6 490</span>
<span class="t" style="left:867.98px;top:584px;font-size:14.00px;color:#000;transform:scaleX(1.0150);">2 161 170</span>
<span class="t" style="left:29.30px;top:605px;font-size:14.00px;color:#000;transform:scaleX(1.0580);">Кроссовки беговые, размер 38</span>
<span class="t" style="left:395.10px;top:605px;font-size:14.00px;color:#000;transform:scaleX(1.1003);">женский</span>
<span class="t" style="left:528.75px;top:605px;font-size:14.00px;color:#000;transform:scaleX(1.0666);">бег</span>
<span class="t" style="left:689.29px;top:605px;font-size:14.00px;color:#000;transform:scaleX(1.0150);">421</span>
<span class="t" style="left:789.44px;top:605px;font-size:14.00px;color:#000;transform:scaleX(1.0150);">6 490</span>
<span class="t" style="left:867.98px;top:605px;font-size:14.00px;color:#000;transform:scaleX(1.0150);">2 732 290</span>
<span class="t" style="left:29.30px;top:626px;font-size:14.00px;color:#000;transform:scaleX(1.0580);">Кроссовки беговые, размер 38</span>
<span class="t" style="left:395.35px;top:626px;font-size:14.00px;color:#000;transform:scaleX(1.0592);">мужской</span>
<span class="t" style="left:528.75px;top:626px;font-size:14.00px;color:#000;transform:scaleX(1.0666);">бег</span>
<span class="t" style="left:689.29px;top:626px;font-size:14.00px;color:#000;transform:scaleX(1.0150);">220</span>
<span class="t" style="left:789.44px;top:626px;font-size:14.00px;color:#000;transform:scaleX(1.0150);">6 990</span>
<span class="t" style="left:867.98px;top:626px;font-size:14.00px;color:#000;transform:scaleX(1.0150);">1 537 800</span>
<span class="t" style="left:29.30px;top:647px;font-size:14.00px;color:#000;transform:scaleX(1.0620);">Кроссовки теннисные, размер 39</span>
<span class="t" style="left:395.10px;top:647px;font-size:14.00px;color:#000;transform:scaleX(1.1003);">женский</span>
<span class="t" style="left:516.30px;top:647px;font-size:14.00px;color:#000;transform:scaleX(1.0607);">теннис</span>
<span class="t" style="left:689.29px;top:647px;font-size:14.00px;color:#000;transform:scaleX(1.0150);">554</span>
<span class="t" style="left:789.44px;top:647px;font-size:14.00px;color:#000;transform:scaleX(1.0150);">7 990</span>
<span class="t" style="left:867.98px;top:647px;font-size:14.00px;color:#000;transform:scaleX(1.0150);">4 426 460</span>
<span class="t" style="left:29.30px;top:668px;font-size:14.00px;color:#000;transform:scaleX(1.0580);">Кроссовки беговые, размер 35</span>
<span class="t" style="left:395.10px;top:668px;font-size:14.00px;color:#000;transform:scaleX(1.1003);">женский</span>
<span class="t" style="left:528.75px;top:668px;font-size:14.00px;color:#000;transform:scaleX(1.0666);">бег</span>
<span class="t" style="left:689.29px;top:668px;font-size:14.00px;color:#000;transform:scaleX(1.0150);">125</span>
<span class="t" style="left:789.44px;top:668px;font-size:14.00px;color:#000;transform:scaleX(1.0150);">3 990</span>
<span class="t" style="left:879.83px;top:668px;font-size:14.00px;color:#000;transform:scaleX(1.0150);">498 750</span>
<span class="t" style="left:213.60px;top:227px;font-size:14.00px;color:#fff;transform:scaleX(1.0760);font-weight:bold;">ание</span>
<span class="t" style="left:411.70px;top:227px;font-size:14.00px;color:#fff;transform:scaleX(0.9647);font-weight:bold;">Пол</span>
<span class="t" style="left:501.30px;top:227px;font-size:14.00px;color:#fff;transform:scaleX(0.9742);font-weight:bold;">Вид спорта</span>
<span class="t" style="left:609.70px;top:227px;font-size:14.00px;color:#fff;transform:scaleX(1.0122);font-weight:bold;">Продано, шт</span>
<span class="t" style="left:735.70px;top:227px;font-size:14.00px;color:#fff;transform:scaleX(1.0464);font-weight:bold;">Цена, руб.</span>
<span class="t" style="left:838.60px;top:227px;font-size:14.00px;color:#fff;transform:scaleX(1.0113);font-weight:bold;">Сумма, руб</span>
<div class="r" style="left:348.5px;top:225.5px;width:16.5px;height:16.5px;border:1px solid #b3b3c4;background:linear-gradient(#ffffff,#eef0f6);"></div>
<svg class="r" style="left:353.1px;top:231.8px;" width="7.4" height="4.3" viewBox="0 0 7.4 4.3"><path d="M0 0H7.4L3.7 4.3Z" fill="#606060"/></svg>
<div class="r" style="left:466.5px;top:225.5px;width:16.5px;height:16.5px;border:1px solid #b3b3c4;background:linear-gradient(#ffffff,#eef0f6);"></div>
<svg class="r" style="left:471.1px;top:231.8px;" width="7.4" height="4.3" viewBox="0 0 7.4 4.3"><path d="M0 0H7.4L3.7 4.3Z" fill="#606060"/></svg>
<div class="r" style="left:579.5px;top:225.5px;width:16.5px;height:16.5px;border:1px solid #b3b3c4;background:linear-gradient(#ffffff,#eef0f6);"></div>
<svg class="r" style="left:584.1px;top:231.8px;" width="7.4" height="4.3" viewBox="0 0 7.4 4.3"><path d="M0 0H7.4L3.7 4.3Z" fill="#606060"/></svg>
<div class="r" style="left:698.5px;top:225.5px;width:16.5px;height:16.5px;border:1px solid #b3b3c4;background:linear-gradient(#ffffff,#eef0f6);"></div>
<svg class="r" style="left:703.1px;top:231.8px;" width="7.4" height="4.3" viewBox="0 0 7.4 4.3"><path d="M0 0H7.4L3.7 4.3Z" fill="#606060"/></svg>
<div class="r" style="left:810.5px;top:225.5px;width:16.5px;height:16.5px;border:1px solid #b3b3c4;background:linear-gradient(#ffffff,#eef0f6);"></div>
<svg class="r" style="left:815.1px;top:231.8px;" width="7.4" height="4.3" viewBox="0 0 7.4 4.3"><path d="M0 0H7.4L3.7 4.3Z" fill="#606060"/></svg>
<div class="r" style="left:916.5px;top:225.5px;width:16.5px;height:16.5px;border:1px solid #b3b3c4;background:linear-gradient(#ffffff,#eef0f6);"></div>
<svg class="r" style="left:921.1px;top:231.8px;" width="7.4" height="4.3" viewBox="0 0 7.4 4.3"><path d="M0 0H7.4L3.7 4.3Z" fill="#606060"/></svg>
<div class="r" style="left:364px;top:389px;width:121px;height:24px;border:2px solid #107a40;"></div>
<div class="r" style="left:480px;top:408px;width:7px;height:7px;background:#fff;"></div>
<div class="r" style="left:481px;top:409px;width:5px;height:5px;background:#107a40;"></div>
<div class="r" style="left:1095px;top:202px;width:21px;height:473px;background:#e6e6e6;"></div>
<div class="r" style="left:1098px;top:219px;width:15px;height:443px;background:#dadada;"></div>
<div class="r" style="left:1098px;top:219px;width:15px;height:265px;background:#fff;border:1px solid #a8a8a8;"></div>
<div class="r" style="left:1098px;top:204px;width:15px;height:15px;background:#fff;border:1px solid #ababab;"></div>
<svg class="r" style="left:1102px;top:209px;" width="7" height="4" viewBox="0 0 7 4"><path d="M0 4H7L3.5 0Z" fill="#777"/></svg>
<div class="r" style="left:1098.5px;top:661px;width:14px;height:14px;background:#fff;border:1px solid #ababab;"></div>
<svg class="r" style="left:1102px;top:666px;" width="7" height="4" viewBox="0 0 7 4"><path d="M0 0H7L3.5 4Z" fill="#777"/></svg>
<div class="r" style="left:0px;top:675px;width:1116px;height:28px;background:#e6e6e6;"></div>
<div class="r" style="left:0px;top:675px;width:1095px;height:1px;background:#ababab;"></div>
<div class="r" style="left:98.3px;top:676px;width:106.3px;height:24px;background:#fff;"></div>
<div class="r" style="left:98.3px;top:697.7px;width:106.3px;height:2px;background:#1e7145;"></div>
<span class="t" style="left:110.40px;top:681px;font-size:13.60px;color:#117c43;transform:scaleX(0.9359);font-weight:bold;">microexcel.ru</span>
<svg class="r" style="left:25px;top:683px;" width="5" height="9" viewBox="0 0 5 9"><path d="M5 0V9L0 4.5Z" fill="#c3c3c3"/></svg>
<svg class="r" style="left:53px;top:683px;" width="5" height="9" viewBox="0 0 5 9"><path d="M0 0V9L5 4.5Z" fill="#c3c3c3"/></svg>
<svg class="r" style="left:237.4px;top:680.3px;" width="17" height="17" viewBox="0 0 17 17"><circle cx="8.5" cy="8.5" r="7.8" fill="none" stroke="#6e6e6e" stroke-width="1.4"/><path d="M8.5 4.2V12.8M4.2 8.5H12.8" stroke="#6e6e6e" stroke-width="1.5"/></svg>
<div class="r" style="left:669px;top:684px;width:2px;height:2px;background:#a8a8a8;"></div>
<div class="r" style="left:669px;top:688px;width:2px;height:2px;background:#a8a8a8;"></div>
<div class="r" style="left:669px;top:692px;width:2px;height:2px;background:#a8a8a8;"></div>
<div class="r" style="left:686px;top:682px;width:15px;height:15px;background:#fff;border:1px solid #ababab;"></div>
<svg class="r" style="left:691px;top:686px;" width="4" height="7" viewBox="0 0 4 7"><path d="M4 0V7L0 3.5Z" fill="#555"/></svg>
<div class="r" style="left:701px;top:682px;width:381px;height:15px;background:#dcdcdc;"></div>
<div class="r" style="left:700px;top:682px;width:332px;height:15px;background:#fff;border:1px solid #ababab;"></div>
<div class="r" style="left:1082px;top:682px;width:15px;height:15px;background:#fff;border:1px solid #ababab;"></div>
<svg class="r" style="left:1088px;top:686px;" width="4" height="7" viewBox="0 0 4 7"><path d="M0 0V7L4 3.5Z" fill="#555"/></svg>
<div class="r" style="left:0px;top:703px;width:1116px;height:21px;background:#f3f3f3;"></div>
<div class="r" style="left:0px;top:703px;width:1116px;height:1px;background:#c9c9c9;"></div>
<span class="t" style="left:6.30px;top:708px;font-size:11.50px;color:#333;transform:scaleX(1.0075);">Готово</span>
<svg class="r" style="left:70px;top:707px;" width="13" height="13" viewBox="0 0 13 13"><rect x="3.5" y="2.5" width="9" height="10" fill="#fff" stroke="#555" stroke-width="1"/><path d="M5 5.5H11M5 7.5H11M5 9.5H11" stroke="#555" stroke-width="1" stroke-dasharray="1.3 1"/><rect x="0" y="0" width="6" height="5" fill="#555"/></svg>
<div class="r" style="left:816px;top:704px;width:38px;height:20px;background:#c8c8c8;"></div>
<svg class="r" style="left:828px;top:707px;" width="14" height="13" viewBox="0 0 14 13"><path d="M0.5 0.5H13.5V12.5H0.5Z M0.5 4.5H13.5M0.5 8.5H13.5M5 0.5V12.5M9.5 0.5V12.5" fill="none" stroke="#707070" stroke-width="1"/></svg>
<svg class="r" style="left:866.3px;top:707px;" width="14" height="13" viewBox="0 0 14 13"><rect x="0.5" y="0.5" width="13" height="12" fill="none" stroke="#707070" stroke-width="1"/><rect x="3.5" y="3" width="7" height="7.5" fill="none" stroke="#707070" stroke-width="1"/><path d="M5 5.5H9M5 7.5H9" stroke="#707070" stroke-width="1"/></svg>
<svg class="r" style="left:904px;top:707px;" width="14" height="13" viewBox="0 0 14 13"><rect x="0.5" y="0.5" width="13" height="12" fill="none" stroke="#707070" stroke-width="1"/><path d="M4.5 0.5V7.5H9.5V0.5" fill="none" stroke="#707070" stroke-width="1"/></svg>
<div class="r" style="left:934px;top:713px;width:6px;height:1.5px;background:#555;"></div>
<div class="r" style="left:945px;top:713.5px;width:100px;height:1px;background:#8a8a8a;"></div>
<div class="r" style="left:993px;top:708px;width:4px;height:11px;background:#555;"></div>
<div class="r" style="left:1049px;top:713px;width:7px;height:1.5px;background:#555;"></div>
<div class="r" style="left:1051.8px;top:710.3px;width:1.5px;height:7px;background:#555;"></div>
<span class="t" style="left:1067.80px;top:708px;font-size:11.50px;color:#333;transform:scaleX(0.8895);">100 %</span>
<div class="r" style="left:0;top:154px;width:219px;height:91px;background:#fff;border:1px solid #c8c8c8;border-left:none;box-shadow:1px 1px 3px rgba(0,0,0,0.18);"></div>
<svg class="r" style="left:16px;top:161px;" width="28" height="28" viewBox="0 0 28 28"><rect x="0.5" y="0.5" width="27" height="27" fill="#fff" stroke="#787878" stroke-width="1"/><rect x="3" y="3" width="4.8" height="4.6" fill="#b2b2b2"/><rect x="9.2" y="3" width="15.8" height="4.6" fill="#b2b2b2"/><rect x="3" y="9.2" width="4.8" height="15.6" fill="#b2b2b2"/><path d="M20.8 10V14C20.8 18 18 20.6 10.2 20.8" fill="none" stroke="#1a7fc1" stroke-width="2"/><path d="M17 13.3L20.8 9.6L24.6 13.3M13.8 17L9.8 20.9L13.8 24.6" fill="none" stroke="#1a7fc1" stroke-width="2"/></svg>
<span class="t" style="left:7.60px;top:196px;font-size:12.00px;color:#262626;transform:scaleX(0.9352);">Сводная</span>
<span class="t" style="left:8.20px;top:212px;font-size:12.00px;color:#262626;transform:scaleX(0.9702);">таблица</span>
<svg class="r" style="left:95px;top:162px;" width="25" height="25" viewBox="0 0 25 25"><rect x="0.5" y="0.5" width="23.5" height="23.5" fill="#fff" stroke="#8a8a8a" stroke-width="1"/><rect x="3" y="3" width="4.7" height="4.7" fill="#b2b2b2"/><rect x="9.2" y="3" width="11.7" height="4.7" fill="#b2b2b2"/><rect x="3" y="9.2" width="4.7" height="11.7" fill="#b2b2b2"/><path d="M9.2 11.5H19M9.2 14.7H19M9.2 17.8H19" stroke="#d4d4d4" stroke-width="1.5"/></svg>
<svg class="r" style="left:108.7px;top:171px;" width="14" height="21" viewBox="0 0 14 21"><path d="M1.8 6.6C1.8 3.2 4 1.7 7 1.7C10.2 1.7 12.3 3.4 12.3 6C12.3 8.2 10.8 9.2 9.3 10.4C7.7 11.6 7.1 12.4 7.1 14.6" fill="none" stroke="#fff" stroke-width="5.6"/><rect x="4.2" y="15.6" width="5.8" height="5.4" fill="#fff"/><path d="M1.8 6.6C1.8 3.2 4 1.7 7 1.7C10.2 1.7 12.3 3.4 12.3 6C12.3 8.2 10.8 9.2 9.3 10.4C7.7 11.6 7.1 12.4 7.1 14.6" fill="none" stroke="#1e80c0" stroke-width="3.4"/><rect x="5.3" y="16.5" width="3.6" height="3.5" fill="#1e80c0"/></svg>
<span class="t" style="left:62.70px;top:196px;font-size:12.00px;color:#262626;transform:scaleX(0.9863);">Рекомендуемые</span>
<span class="t" style="left:57.30px;top:212px;font-size:12.00px;color:#262626;transform:scaleX(0.9953);">сводные таблицы</span>
<svg class="r" style="left:171px;top:161px;" width="28" height="28" viewBox="0 0 28 28"><rect x="0.5" y="0.5" width="27" height="27" fill="#fcf0f6" stroke="#bdb5b9" stroke-width="1"/><rect x="0" y="0" width="28" height="4.2" fill="#b4b4b4"/><path d="M0.5 8H27.5M0.5 12H27.5M0.5 16H27.5M0.5 20H27.5M0.5 24H27.5M9.5 4V27.5M18.3 4V27.5" stroke="#c9c1c5" stroke-width="1"/><path d="M3.3 1.2H6.7L5 3.2ZM12.3 1.2H15.7L14 3.2ZM21.3 1.2H24.7L23 3.2Z" fill="#fff"/></svg>
<span class="t" style="left:161.30px;top:196px;font-size:12.00px;color:#b5b5b5;transform:scaleX(0.9894);">Таблица</span>
<span class="t" style="left:83.60px;top:231px;font-size:12.00px;color:#262626;transform:scaleX(0.9221);">Таблицы</span>
<div class="r" style="left:-1px;top:155px;width:62px;height:85px;border:3.2px solid #f00;border-radius:12px;"></div>
</body></html>
